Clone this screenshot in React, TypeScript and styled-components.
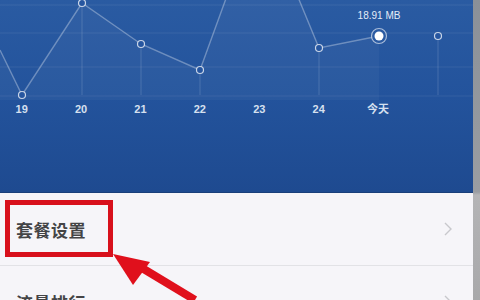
import React from 'react';
import styled, {createGlobalStyle} from 'styled-components';

const GlobalStyle = createGlobalStyle`
  html, body {
    margin: 0;
    padding: 0;
    width: 480px;
    height: 300px;
    overflow: hidden;
    font-family: "Noto Sans CJK SC", "Noto Sans", sans-serif;
  }
`

const points: [number, number][] = [
    [0, 50], [22, 95], [82, 3], [141, 44], [200, 70], [260, -95], [319, 48], [379, 36],
]
const dots: [number, number][] = [[22, 95], [82, 3], [141, 44], [200, 70], [319, 48], [438, 36]]
const ticks = ['19', '20', '21', '22', '23', '24', '今天', '']
const rows = ['套餐设置', '流量排行']

const Chart = () => {
    const line = points.map(p => p.join(',')).join(' ')
    return (
        <ChartSvg width="473" height="100" viewBox="0 0 473 100">
            {[5, 33, 67, 96].map(y => (
                <line key={y} x1="0" x2="473" y1={y} y2={y} stroke="#fff" strokeOpacity="0.08"/>
            ))}
            <polygon points={`${line} 379,100 0,100`} fill="#fff" fillOpacity="0.035"/>
            {dots.map(([x, y]) => (
                <line key={x} x1={x} x2={x} y1={y} y2="95" stroke="#fff" strokeOpacity="0.15"/>
            ))}
            <polyline points={line} fill="none" stroke="#fff" strokeOpacity="0.32" strokeWidth="1.4"/>
            {dots.map(([x, y]) => (
                <circle key={x} cx={x} cy={y} r="3.5" fill="#2656a0" stroke="#fff" strokeOpacity="0.75"
                        strokeWidth="1.2"/>
            ))}
            <circle cx="379" cy="36" r="7.5" fill="#2a5aa2" stroke="#fff" strokeOpacity="0.6" strokeWidth="1.2"/>
            <circle cx="379" cy="36" r="4.5" fill="#fff"/>
            <text x="379" y="19" textAnchor="middle" fontSize="10" fill="#e4ecf7"
                  fontFamily="'Liberation Sans', sans-serif">18.91 MB</text>
        </ChartSvg>
    )
}

const Chevron = () => (
    <svg width="10" height="16" viewBox="0 0 10 16">
        <polyline points="2,2 8,8 2,14" fill="none" stroke="#c8c8cc" strokeWidth="1.4"/>
    </svg>
)

const Arrow = () => (
    <ArrowSvg width="100" height="60" viewBox="0 0 100 60">
        <line x1="32" y1="26" x2="85" y2="58" stroke="#e0101c" strokeWidth="8"/>
        <polygon points="3,12 40,20 23,43" fill="#e0101c"/>
    </ArrowSvg>
)

export default function App() {
    return (
        <Screen>
            <GlobalStyle/>
            <Main>
                <ChartPanel>
                    <Chart/>
                    <AxisRow>
                        {ticks.map((t, i) => <Tick key={i}>{t}</Tick>)}
                    </AxisRow>
                </ChartPanel>
                <List>
                    {rows.map(r => (
                        <Row key={r}>
                            <RowTitle>{r}</RowTitle>
                            <Chevron/>
                        </Row>
                    ))}
                    <Highlight/>
                    <Arrow/>
                </List>
            </Main>
            <ScrollStrip/>
        </Screen>
    );
}

const Screen = styled.div`
    display: flex;
    width: 480px;
    height: 300px;
    overflow: hidden;
`

const Main = styled.div`
    flex: 1;
    display: flex;
    flex-direction: column;
`

const ChartPanel = styled.section`
    height: 192px;
    flex-shrink: 0;
    background: linear-gradient(180deg, #2a5ba2 0%, #23539c 50%, #1e4a90 100%);
    border-bottom: 1px solid #1a3f7a;
    display: flex;
    flex-direction: column;
`

const ChartSvg = styled.svg`
    display: block;
    overflow: visible;
`

const AxisRow = styled.div`
    display: flex;
    margin: 2px 0 0 -8px;
`

const Tick = styled.span`
    width: 59.4px;
    flex-shrink: 0;
    text-align: center;
    font-family: "Liberation Sans", "Noto Sans CJK SC", sans-serif;
    font-size: 11px;
    font-weight: bold;
    line-height: 14px;
    color: #d6e0ef;
`

const List = styled.div`
    position: relative;
    flex: 1;
    background: #f6f5f9;
`

const Row = styled.div`
    height: 72px;
    display: flex;
    align-items: center;
    justify-content: space-between;
    padding: 0 20px 0 16px;
    border-bottom: 1px solid #e2e2e6;
`

const RowTitle = styled.span`
    font-size: 17px;
    font-weight: 600;
    color: #444446;
    letter-spacing: 0.5px;
`

const Highlight = styled.div`
    position: absolute;
    left: 5px;
    top: 7px;
    width: 98px;
    height: 47px;
    border: 5px solid #d8101c;
`

const ArrowSvg = styled.svg`
    position: absolute;
    left: 110px;
    top: 49px;
`

const ScrollStrip = styled.div`
    width: 7px;
    background: linear-gradient(180deg, #8a9098 0%, #9a9da2 64%, #b4b4b6 65%, #a8a8aa 100%);
`
